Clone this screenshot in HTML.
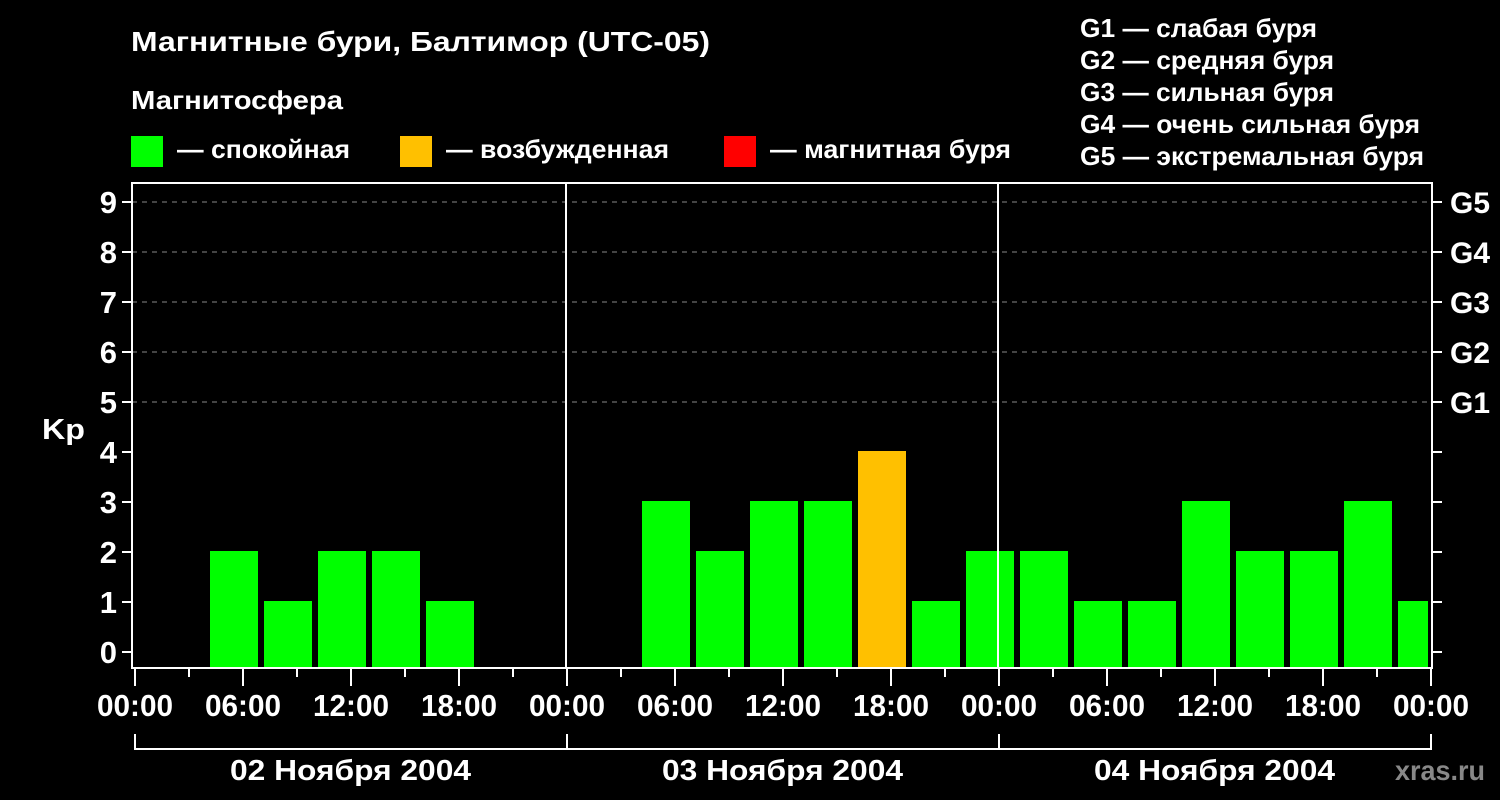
<!DOCTYPE html><html><head><meta charset="utf-8"><style>html,body{margin:0;background:#000;}svg{display:block}text{font-family:"Liberation Sans",sans-serif;font-weight:bold;fill:#fff}</style></head><body>
<svg width="1500" height="800" viewBox="0 0 1500 800">
<rect width="1500" height="800" fill="#000"/>
<text x="131" y="51" font-size="28" textLength="579" lengthAdjust="spacingAndGlyphs">Магнитные бури, Балтимор (UTC-05)</text>
<text x="131" y="109" font-size="26" textLength="212" lengthAdjust="spacingAndGlyphs">Магнитосфера</text>
<rect x="131" y="136" width="32" height="31" fill="#00ff00"/>
<text x="177" y="158" font-size="26" textLength="173" lengthAdjust="spacingAndGlyphs">— спокойная</text>
<rect x="400" y="136" width="32" height="31" fill="#ffc000"/>
<text x="446" y="158" font-size="26" textLength="223" lengthAdjust="spacingAndGlyphs">— возбужденная</text>
<rect x="724" y="136" width="32" height="31" fill="#ff0000"/>
<text x="770" y="158" font-size="26" textLength="241" lengthAdjust="spacingAndGlyphs">— магнитная буря</text>
<g font-size="26">
<text x="1080" y="37" textLength="237" lengthAdjust="spacingAndGlyphs">G1 — слабая буря</text>
<text x="1080" y="69" textLength="254" lengthAdjust="spacingAndGlyphs">G2 — средняя буря</text>
<text x="1080" y="101" textLength="254" lengthAdjust="spacingAndGlyphs">G3 — сильная буря</text>
<text x="1080" y="133" textLength="340" lengthAdjust="spacingAndGlyphs">G4 — очень сильная буря</text>
<text x="1080" y="165" textLength="344" lengthAdjust="spacingAndGlyphs">G5 — экстремальная буря</text>
</g>
<g stroke="#888" stroke-width="1" stroke-dasharray="5,5">
<line x1="132" y1="202" x2="1432" y2="202"/><line x1="132" y1="252" x2="1432" y2="252"/><line x1="132" y1="302" x2="1432" y2="302"/><line x1="132" y1="352" x2="1432" y2="352"/><line x1="132" y1="402" x2="1432" y2="402"/>
</g>
<g fill="#00ff00">
<rect x="210" y="551" width="48" height="117"/>
<rect x="264" y="601" width="48" height="67"/>
<rect x="318" y="551" width="48" height="117"/>
<rect x="372" y="551" width="48" height="117"/>
<rect x="426" y="601" width="48" height="67"/>
<rect x="642" y="501" width="48" height="167"/>
<rect x="696" y="551" width="48" height="117"/>
<rect x="750" y="501" width="48" height="167"/>
<rect x="804" y="501" width="48" height="167"/>
<rect x="912" y="601" width="48" height="67"/>
<rect x="966" y="551" width="48" height="117"/>
<rect x="1020" y="551" width="48" height="117"/>
<rect x="1074" y="601" width="48" height="67"/>
<rect x="1128" y="601" width="48" height="67"/>
<rect x="1182" y="501" width="48" height="167"/>
<rect x="1236" y="551" width="48" height="117"/>
<rect x="1290" y="551" width="48" height="117"/>
<rect x="1344" y="501" width="48" height="167"/>
<rect x="1398" y="601" width="30" height="67"/>
</g>
<rect x="858" y="451" width="48" height="217" fill="#ffc000"/>
<g stroke="#fff" stroke-width="2" fill="none">
<rect x="132" y="183" width="1300" height="485"/>
<line x1="566" y1="183" x2="566" y2="668"/><line x1="998" y1="183" x2="998" y2="668"/>
<path d="M122 202H132M122 252H132M122 302H132M122 352H132M122 402H132M122 452H132M122 502H132M122 552H132M122 602H132M122 652H132"/>
<path d="M1432 202H1442M1432 252H1442M1432 302H1442M1432 352H1442M1432 402H1442M1432 452H1442M1432 502H1442M1432 552H1442M1432 602H1442M1432 652H1442"/>
<path d="M135 668V686M189 668V677M243 668V686M297 668V677M351 668V686M405 668V677M459 668V686M513 668V677M567 668V686M621 668V677M675 668V686M729 668V677M783 668V686M837 668V677M891 668V686M945 668V677M999 668V686M1053 668V677M1107 668V686M1161 668V677M1215 668V686M1269 668V677M1323 668V686M1377 668V677M1431 668V686"/>
<path d="M135 734V749H1431V734M567 734V749M999 734V749"/>
</g>
<g font-size="31" text-anchor="end">
<text x="117" y="213">9</text><text x="117" y="263">8</text><text x="117" y="313">7</text><text x="117" y="363">6</text><text x="117" y="413">5</text><text x="117" y="463">4</text><text x="117" y="513">3</text><text x="117" y="563">2</text><text x="117" y="613">1</text><text x="117" y="663">0</text>
</g>
<text x="42" y="439" font-size="29" textLength="43" lengthAdjust="spacingAndGlyphs">Kp</text>
<g font-size="30">
<text x="1450" y="213" textLength="40" lengthAdjust="spacingAndGlyphs">G5</text><text x="1450" y="263" textLength="40" lengthAdjust="spacingAndGlyphs">G4</text><text x="1450" y="313" textLength="40" lengthAdjust="spacingAndGlyphs">G3</text><text x="1450" y="363" textLength="40" lengthAdjust="spacingAndGlyphs">G2</text><text x="1450" y="413" textLength="40" lengthAdjust="spacingAndGlyphs">G1</text>
</g>
<g font-size="31">
<text x="97" y="716" textLength="76" lengthAdjust="spacingAndGlyphs">00:00</text><text x="205" y="716" textLength="76" lengthAdjust="spacingAndGlyphs">06:00</text><text x="313" y="716" textLength="76" lengthAdjust="spacingAndGlyphs">12:00</text><text x="421" y="716" textLength="76" lengthAdjust="spacingAndGlyphs">18:00</text>
<text x="529" y="716" textLength="76" lengthAdjust="spacingAndGlyphs">00:00</text><text x="637" y="716" textLength="76" lengthAdjust="spacingAndGlyphs">06:00</text><text x="745" y="716" textLength="76" lengthAdjust="spacingAndGlyphs">12:00</text><text x="853" y="716" textLength="76" lengthAdjust="spacingAndGlyphs">18:00</text>
<text x="961" y="716" textLength="76" lengthAdjust="spacingAndGlyphs">00:00</text><text x="1069" y="716" textLength="76" lengthAdjust="spacingAndGlyphs">06:00</text><text x="1177" y="716" textLength="76" lengthAdjust="spacingAndGlyphs">12:00</text><text x="1285" y="716" textLength="76" lengthAdjust="spacingAndGlyphs">18:00</text><text x="1393" y="716" textLength="76" lengthAdjust="spacingAndGlyphs">00:00</text>
</g>
<g font-size="29">
<text x="230" y="780" textLength="241" lengthAdjust="spacingAndGlyphs">02 Ноября 2004</text><text x="662" y="780" textLength="241" lengthAdjust="spacingAndGlyphs">03 Ноября 2004</text><text x="1094" y="780" textLength="241" lengthAdjust="spacingAndGlyphs">04 Ноября 2004</text>
</g>
<text x="1395" y="780" font-size="28" textLength="90" lengthAdjust="spacingAndGlyphs" style="fill:#888">xras.ru</text>
</svg></body></html>
